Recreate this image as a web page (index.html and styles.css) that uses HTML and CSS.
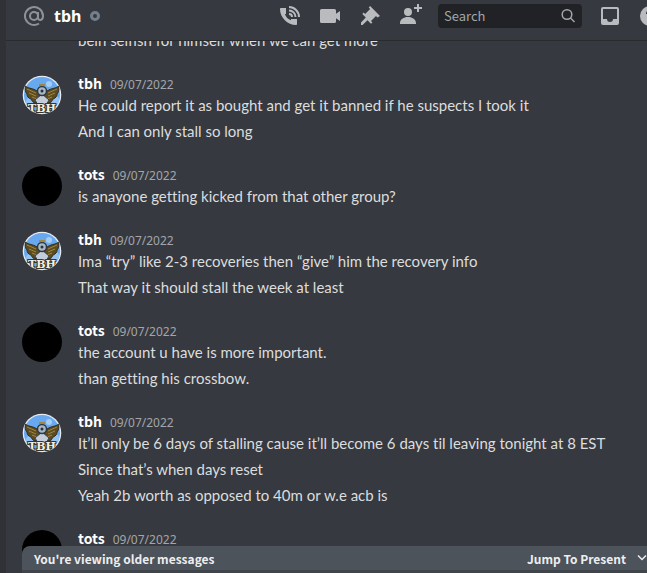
FILE: index.html
```html
<!DOCTYPE html>
<html lang="en">
<head>
<meta charset="utf-8">
<title>tbh</title>
<link rel="stylesheet" href="styles.css">
</head>
<body>
<svg class="defs" width="0" height="0" aria-hidden="true">
  <defs>
    <clipPath id="round"><circle cx="20" cy="20" r="19"/></clipPath>
    <symbol id="tbh-avatar" viewBox="0 0 40 40">
      <circle cx="20" cy="20" r="19.3" fill="#e4ebf2"/>
      <circle cx="20" cy="20" r="18" fill="#68a8ef"/>
      <g clip-path="url(#round)">
        <circle cx="8" cy="27" r="4" fill="#94c3f5"/><circle cx="27" cy="9" r="3" fill="#a3ccf6"/><circle cx="33" cy="25" r="4" fill="#94c3f5"/>
        <path d="M3 11c4 3 8 2 12 5l3 4-4 8c-3 0-4-2-5-4-3-1-4-3-4-5-2-2-2-5-2-8zM37 11c-4 3-8 2-12 5l-3 4 4 8c3 0 4-2 5-4 3-1 4-3 4-5 2-2 2-5 2-8z" fill="#5c4c20" stroke="#302d20"/>
        <path d="M5 14l9 4M7 18l7 3M10 22l5 2M35 14l-9 4M33 18l-7 3M30 22l-5 2" stroke="#a08740" fill="none"/>
        <path d="M13 25l7-6 7 6-3 5h-8z" fill="#c3ceda" stroke="#39434d"/>
        <circle cx="20" cy="16" r="4.5" fill="#a9b8c5" stroke="#303941" stroke-width="1.5"/>
        <circle cx="20" cy="16" r="1.500" fill="#28323d"/><path d="M17 10h6" stroke="#a08740" stroke-width="2"/>
        <text class="avatar-text" x="20" y="37" text-anchor="middle">TBH</text>
      </g>
    </symbol>
  </defs>
</svg>
<div class="app">
  <div class="rail"></div>
  <main class="chat">
    <header class="topbar">
      <svg class="at" width="22" height="22" viewBox="0 0 22 22" fill="none" stroke="#8e9297" stroke-width="2"><circle cx="11" cy="11" r="4"/><path d="M15 7v5.500c0 3.500 5 3.500 5-1.500a9 9 0 1 0-4 7.500"/></svg>
      <h1 class="title">tbh</h1>
      <span class="status"></span>
      <nav class="tools">
        <button class="tool" aria-label="Start voice call"><svg width="24" height="24" viewBox="0 0 24 24" fill="currentColor"><path d="M11 4V2a11 11 0 0 1 11 11h-2a9 9 0 0 0-9-9zm0 3.500v-2a7.500 7.500 0 0 1 7.500 7.500h-2A5.500 5.500 0 0 0 11 7.500zm0 3.500V9a4 4 0 0 1 4 4h-2a2 2 0 0 0-2-2zm8 5v4c0 .600-.400 1-1 1C9.600 21 2 13.600 2 5c0-.600.400-1 1-1h5v6H6.900A9.500 9.500 0 0 0 13 16.200V15h6z"/></svg></button>
        <button class="tool" aria-label="Start video call"><svg width="24" height="24" viewBox="0 0 24 24" fill="currentColor"><path d="M3.500 5h13A1.500 1.500 0 0 1 18 6.500V9.700L22 7v10l-4-2.700v3.200a1.500 1.500 0 0 1-1.500 1.500h-13A1.500 1.500 0 0 1 2 17.500v-11A1.500 1.500 0 0 1 3.500 5z"/></svg></button>
        <button class="tool" aria-label="Pinned messages"><svg width="24" height="24" viewBox="0 0 24 24" fill="currentColor"><path d="M22 12l-9.900-9.900-1.400 1.500 1.400 1.400-5 5-1.400-1.400L4.300 10l3.500 3.500L3 18.400V21h1.600l4.900-4.700 3.500 3.500 1.400-1.400-1.400-1.400 5-5 1.400 1.400z"/></svg></button>
        <button class="tool" aria-label="Add friends"><svg width="24" height="24" viewBox="0 0 24 24" fill="currentColor"><path d="M21 3V0h-2v3h-3v2h3v3h2V5h3V3zM10 12a4 4 0 1 0 0-8 4 4 0 0 0 0 8zM10 13c-4.400 0-8 2.400-8 6v1h16v-1c0-3.600-3.600-6-8-6z"/></svg></button>
        <label class="search">
          <input class="search-input" type="text" placeholder="Search" aria-label="Search">
          <svg width="16" height="16" viewBox="0 0 16 16" fill="none" stroke="#a3a6aa" stroke-width="1.500"><circle cx="7" cy="6.500" r="4.800"/><path d="M10.500 10l4 4"/></svg>
        </label>
        <button class="tool inbox" aria-label="Inbox"><svg width="24" height="24" viewBox="0 0 24 24" fill="currentColor" fill-rule="evenodd"><path d="M5 3h14a2 2 0 0 1 2 2v14a2 2 0 0 1-2 2H5a2 2 0 0 1-2-2V5a2 2 0 0 1 2-2zm0 2v10h4a3 3 0 0 0 6 0h4V5z"/></svg></button>
        <button class="tool" aria-label="Help"><svg width="24" height="24" viewBox="0 0 24 24"><circle cx="12" cy="12" r="10" fill="currentColor"/><path d="M9 10a3 3 0 1 1 4.500 2.500C12.300 13.200 12 14 12 15M12 16.500v2" fill="none" stroke="#36393f" stroke-width="2"/></svg></button>
      </nav>
    </header>
    <section class="messages">
      <article class="group"><div class="avatar"></div><div class="body">
        <p class="line">bein selfish for himself when we can get more</p></div></article>
      <article class="group"><svg class="avatar"><use href="#tbh-avatar"/></svg><div class="body">
        <h2 class="meta">tbh <time class="date">09/07/2022</time></h2>
        <p class="line">He could report it as bought and get it banned if he suspects I took it</p>
        <p class="line">And I can only stall so long</p></div></article>
      <article class="group"><div class="avatar black"></div><div class="body">
        <h2 class="meta">tots <time class="date">09/07/2022</time></h2>
        <p class="line">is anayone getting kicked from that other group?</p></div></article>
      <article class="group"><svg class="avatar"><use href="#tbh-avatar"/></svg><div class="body">
        <h2 class="meta">tbh <time class="date">09/07/2022</time></h2>
        <p class="line">Ima “try” like 2-3 recoveries then “give” him the recovery info</p>
        <p class="line">That way it should stall the week at least</p></div></article>
      <article class="group"><div class="avatar black"></div><div class="body">
        <h2 class="meta">tots <time class="date">09/07/2022</time></h2>
        <p class="line">the account u have is more important.</p>
        <p class="line">than getting his crossbow.</p></div></article>
      <article class="group"><svg class="avatar"><use href="#tbh-avatar"/></svg><div class="body">
        <h2 class="meta">tbh <time class="date">09/07/2022</time></h2>
        <p class="line">It’ll only be 6 days of stalling cause it’ll become 6 days til leaving tonight at 8 EST</p>
        <p class="line">Since that’s when days reset</p>
        <p class="line">Yeah 2b worth as opposed to 40m or w.e acb is</p></div></article>
      <article class="group"><div class="avatar black"></div><div class="body">
        <h2 class="meta">tots <time class="date">09/07/2022</time></h2>
        <p class="line"></p></div></article>
    </section>
    <footer class="bottom">
      <div class="banner">
        <span>You're viewing older messages</span>
        <button class="jump">Jump To Present <svg width="10" height="8" viewBox="0 0 10 8" fill="none" stroke="currentColor" stroke-width="1.500"><path d="M1 1.500l4 4 4-4"/></svg></button>
      </div>
      <div class="composer"></div>
    </footer>
  </main>
</div>
</body>
</html>
```
FILE: styles.css
```css
* { box-sizing: border-box; }

body {
  margin: 0;
  background: #36393f;
  color: #dcddde;
  font-family: "Noto Sans CJK SC", "Noto Sans", sans-serif;
  font-size: 14px;
  overflow: hidden;
}

h1, h2, p { margin: 0; }

button {
  border: 0;
  padding: 0;
  background: none;
  color: inherit;
  font: inherit;
}

.defs { position: absolute; }

.app {
  display: flex;
  height: 100vh;
}

.rail {
  flex: 0 0 6px;
  background: #2f3136;
}

.chat {
  position: relative;
  flex: 1;
  min-width: 0;
  display: flex;
  flex-direction: column;
}

.topbar {
  flex: 0 0 41px;
  display: flex;
  align-items: center;
  padding: 0 0 8px 17px;
  border-bottom: 1px solid #292b2f;
  overflow: hidden;
}

.at { flex: none; }

.title {
  margin-left: 9px;
  color: #fff;
  font-family: "Noto Sans", sans-serif;
  font-size: 16px;
  font-weight: 700;
  line-height: 24px;
}

.status {
  width: 10px;
  height: 10px;
  margin-left: 9px;
  border: 3px solid #747f8d;
  border-radius: 50%;
}

.tools {
  flex: none;
  display: flex;
  align-items: center;
  gap: 16px;
  margin-left: auto;
  margin-right: -15px;
  color: #b9bbbe;
}

.tool {
  width: 24px;
  height: 24px;
}

.tool svg { display: block; }

.search {
  display: flex;
  align-items: center;
  width: 144px;
  height: 24px;
  padding: 0 6px;
  border-radius: 4px;
  background: #202225;
}

.search-input {
  flex: 1;
  min-width: 0;
  border: 0;
  padding: 0;
  outline: 0;
  background: none;
  color: #dcddde;
  font: inherit;
  font-size: 13px;
  line-height: 20px;
}

.search-input::placeholder { color: #a3a6aa; }

.messages {
  flex: 1;
  min-height: 0;
  display: flex;
  flex-direction: column;
  justify-content: flex-end;
  gap: 23px;
  padding: 0 16px 2px;
  overflow: hidden;
}

.group {
  flex: none;
  display: flex;
  gap: 16px;
}

.group:first-child { align-items: flex-end; }

.avatar {
  flex: none;
  width: 40px;
  height: 40px;
  margin-top: 1px;
  border-radius: 50%;
}

.black { background: #000; }

.avatar-text {
  fill: #f4f0e2;
  stroke: #3b3527;
  stroke-width: 2px;
  paint-order: stroke;
  font: 700 11px "DejaVu Serif", serif;
}

.body {
  display: flex;
  flex-direction: column;
}

.meta {
  display: flex;
  align-items: baseline;
  gap: 8px;
  height: 20px;
  color: #fff;
  font-size: 14px;
  font-weight: 700;
  line-height: 18px;
}

.date {
  color: #a3a6aa;
  font-family: "Noto Sans", sans-serif;
  font-size: 12px;
  font-weight: 400;
}

.line {
  height: 22px;
  font-family: Lato, sans-serif;
  font-size: 15px;
  font-variant-ligatures: none;
  line-height: 22px;
  white-space: nowrap;
}

.line + .line { margin-top: 4px; }

.bottom {
  position: absolute;
  right: 0;
  bottom: 0;
  left: 16px;
  border-radius: 8px 0 0 0;
  overflow: hidden;
}

.banner {
  display: flex;
  align-items: center;
  justify-content: space-between;
  height: 24px;
  padding-left: 12px;
  background: #4d535b;
  color: #eceef0;
  font-size: 12px;
  font-weight: 700;
}

.jump {
  display: flex;
  align-items: center;
  gap: 11px;
}

.composer {
  height: 3px;
  background: #40444b;
}
```
